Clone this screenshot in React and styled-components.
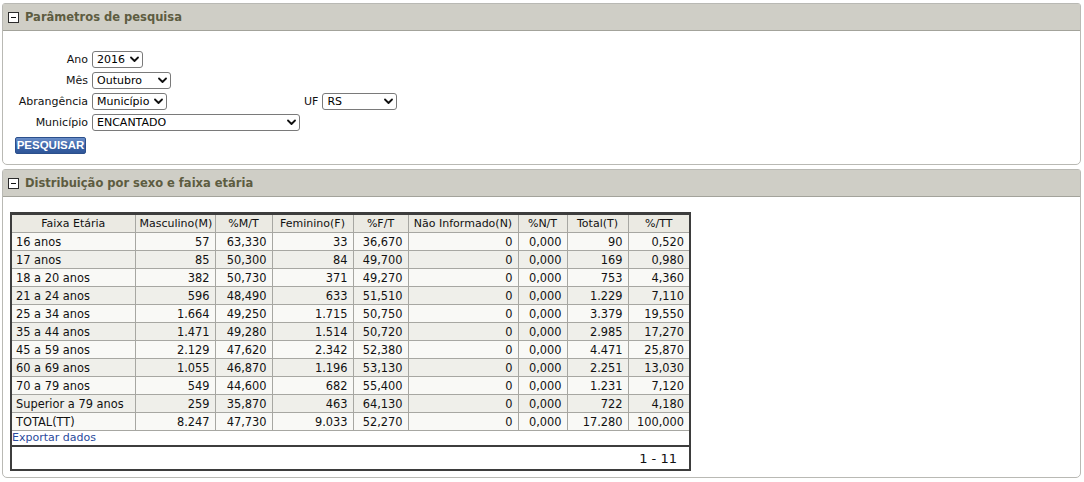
import React from "react";
import styled, { createGlobalStyle } from "styled-components";

const Global = createGlobalStyle`
  html, body { margin: 0; padding: 0; background: #fff; }
  body { font-family: "DejaVu Sans", Verdana, sans-serif; font-size: 11px; color: #111; }
`;

const Page = styled.div`
  padding: 3px 3px 0 2px;
  display: flex;
  flex-direction: column;
  gap: 4px;
`;

const Panel = styled.section`
  border: 1px solid #b9b9b4;
  border-radius: 3px 3px 5px 5px;
  background: #fff;
`;

const PanelHeader = styled.div`
  height: 26px;
  background: #cfcec6;
  border-bottom: 1px solid #a3a39b;
  display: flex;
  align-items: center;
  gap: 6px;
  padding-left: 5px;
  font-weight: bold;
  font-size: 11.5px;
  color: #5d5c41;
`;

const Toggle = styled.span`
  width: 9px;
  height: 9px;
  border: 1px solid #2b2b2b;
  background: #fff;
  position: relative;
  display: inline-block;
  &::after {
    content: "";
    position: absolute;
    left: 2px;
    right: 2px;
    top: 4px;
    height: 1px;
    background: #111;
  }
`;

const PanelBody = styled.div`
  padding: ${(p) => p.$pad};
`;

const Form = styled.div`
  display: grid;
  grid-template-columns: 70px auto;
  column-gap: 4px;
  row-gap: 4px;
  margin-left: 15px;
  align-items: center;
`;

const Label = styled.label`
  text-align: right;
  white-space: nowrap;
  line-height: 17px;
`;

const Inline = styled.div`
  display: flex;
  align-items: center;
`;

const UfLabel = styled.label`
  margin-left: ${(p) => p.$offset}px;
  margin-right: 4px;
`;

const SelectWrap = styled.span`
  position: relative;
  display: inline-block;
  width: ${(p) => p.$w}px;
  height: 17px;
`;

const Select = styled.select`
  appearance: none;
  -webkit-appearance: none;
  width: 100%;
  height: 17px;
  border: 1px solid #7a7a7a;
  border-radius: 3px;
  background: #fff;
  font-family: "DejaVu Sans", Verdana, sans-serif;
  font-size: 11px;
  color: #000;
  padding: 0 0 0 4px;
  margin: 0;
  outline: none;
  box-sizing: border-box;
`;

const Chevron = styled.svg`
  position: absolute;
  right: 4px;
  top: 5px;
  width: 9px;
  height: 7px;
  pointer-events: none;
`;

const Button = styled.button`
  margin: 6px 0 0 12px;
  height: 17px;
  width: 71px;
  padding: 0;
  border: 1px solid #2b4f8c;
  border-radius: 2px;
  background: linear-gradient(#6b8fc9, #3b63a8 55%, #2f5698);
  color: #fff;
  font-family: "Liberation Sans", Arial, sans-serif;
  font-weight: bold;
  font-size: 11.5px;
  line-height: 15px;
`;

const Frame = styled.div`
  width: 677px;
  border: 2px solid #3d3d3d;
  border-top: 3px solid #3d3d3d;
  background: #fff;
`;

const Table = styled.table`
  border-collapse: collapse;
  table-layout: fixed;
  width: 677px;
`;

const Th = styled.th`
  font-weight: normal;
  background: #ebeae3;
  border: 1px solid #a7a7a2;
  border-top: none;
  height: 17px;
  padding: 0 4px;
  text-align: center;
  white-space: nowrap;
  overflow: hidden;
  &:first-child { border-left: none; }
  &:last-child { border-right: none; }
`;

const Td = styled.td`
  border: 1px solid #a7a7a2;
  height: 17px;
  padding: 0 5px 0 4px;
  font-size: 11.4px;
  text-align: ${(p) => (p.$left ? "left" : "right")};
  white-space: nowrap;
  background: ${(p) => (p.$alt ? "#efefea" : "#f9f9f6")};
  &:first-child { border-left: none; }
  &:last-child { border-right: none; }
`;

const Export = styled.a`
  display: block;
  color: #2a4a9c;
  text-decoration: none;
  line-height: 14px;
  padding-left: 0;
`;

const Pager = styled.div`
  border-top: 2px solid #3d3d3d;
  height: 22px;
  display: flex;
  align-items: center;
  justify-content: flex-end;
  padding-right: 12px;
  font-size: 13px;
`;

const cols = [123, 80, 57, 81, 55, 110, 49, 61, 61];
const heads = ["Faixa Etária", "Masculino(M)", "%M/T", "Feminino(F)", "%F/T", "Não Informado(N)", "%N/T", "Total(T)", "%/TT"];
const rows = [
  ["16 anos", "57", "63,330", "33", "36,670", "0", "0,000", "90", "0,520"],
  ["17 anos", "85", "50,300", "84", "49,700", "0", "0,000", "169", "0,980"],
  ["18 a 20 anos", "382", "50,730", "371", "49,270", "0", "0,000", "753", "4,360"],
  ["21 a 24 anos", "596", "48,490", "633", "51,510", "0", "0,000", "1.229", "7,110"],
  ["25 a 34 anos", "1.664", "49,250", "1.715", "50,750", "0", "0,000", "3.379", "19,550"],
  ["35 a 44 anos", "1.471", "49,280", "1.514", "50,720", "0", "0,000", "2.985", "17,270"],
  ["45 a 59 anos", "2.129", "47,620", "2.342", "52,380", "0", "0,000", "4.471", "25,870"],
  ["60 a 69 anos", "1.055", "46,870", "1.196", "53,130", "0", "0,000", "2.251", "13,030"],
  ["70 a 79 anos", "549", "44,600", "682", "55,400", "0", "0,000", "1.231", "7,120"],
  ["Superior a 79 anos", "259", "35,870", "463", "64,130", "0", "0,000", "722", "4,180"],
  ["TOTAL(TT)", "8.247", "47,730", "9.033", "52,270", "0", "0,000", "17.280", "100,000"],
];

function Sel({ w, value, options }) {
  return (
    <SelectWrap $w={w}>
      <Select defaultValue={value}>
        {options.map((o) => (
          <option key={o}>{o}</option>
        ))}
      </Select>
      <Chevron viewBox="0 0 9 7">
        <path d="M1 1.5 L4.5 5 L8 1.5" fill="none" stroke="#111" strokeWidth="1.8" strokeLinecap="round" strokeLinejoin="round" />
      </Chevron>
    </SelectWrap>
  );
}

export default function App() {
  return (
    <>
      <Global />
      <Page>
        <Panel>
          <PanelHeader>
            <Toggle />
            Parâmetros de pesquisa
          </PanelHeader>
          <PanelBody $pad="20px 0 10px 0">
            <Form>
              <Label>Ano</Label>
              <Inline><Sel w={51} value="2016" options={["2016", "2015"]} /></Inline>
              <Label>Mês</Label>
              <Inline><Sel w={79} value="Outubro" options={["Outubro", "Setembro"]} /></Inline>
              <Label>Abrangência</Label>
              <Inline>
                <Sel w={75} value="Município" options={["Município", "Estado"]} />
                <UfLabel $offset={137}>UF</UfLabel>
                <Sel w={75} value="RS" options={["RS", "SC"]} />
              </Inline>
              <Label>Município</Label>
              <Inline><Sel w={208} value="ENCANTADO" options={["ENCANTADO"]} /></Inline>
            </Form>
            <Button>PESQUISAR</Button>
          </PanelBody>
        </Panel>
        <Panel>
          <PanelHeader>
            <Toggle />
            Distribuição por sexo e faixa etária
          </PanelHeader>
          <PanelBody $pad="15px 0 6px 7px">
            <Frame>
              <Table>
                <colgroup>
                  {cols.map((c, i) => (
                    <col key={i} style={{ width: c }} />
                  ))}
                </colgroup>
                <thead>
                  <tr>
                    {heads.map((h) => (
                      <Th key={h}>{h}</Th>
                    ))}
                  </tr>
                </thead>
                <tbody>
                  {rows.map((r, ri) => (
                    <tr key={r[0]}>
                      {r.map((c, ci) => (
                        <Td key={ci} $left={ci === 0} $alt={ri % 2 === 1}>
                          {c}
                        </Td>
                      ))}
                    </tr>
                  ))}
                </tbody>
              </Table>
              <Export href="#">Exportar dados</Export>
              <Pager>1 - 11</Pager>
            </Frame>
          </PanelBody>
        </Panel>
      </Page>
    </>
  );
}
